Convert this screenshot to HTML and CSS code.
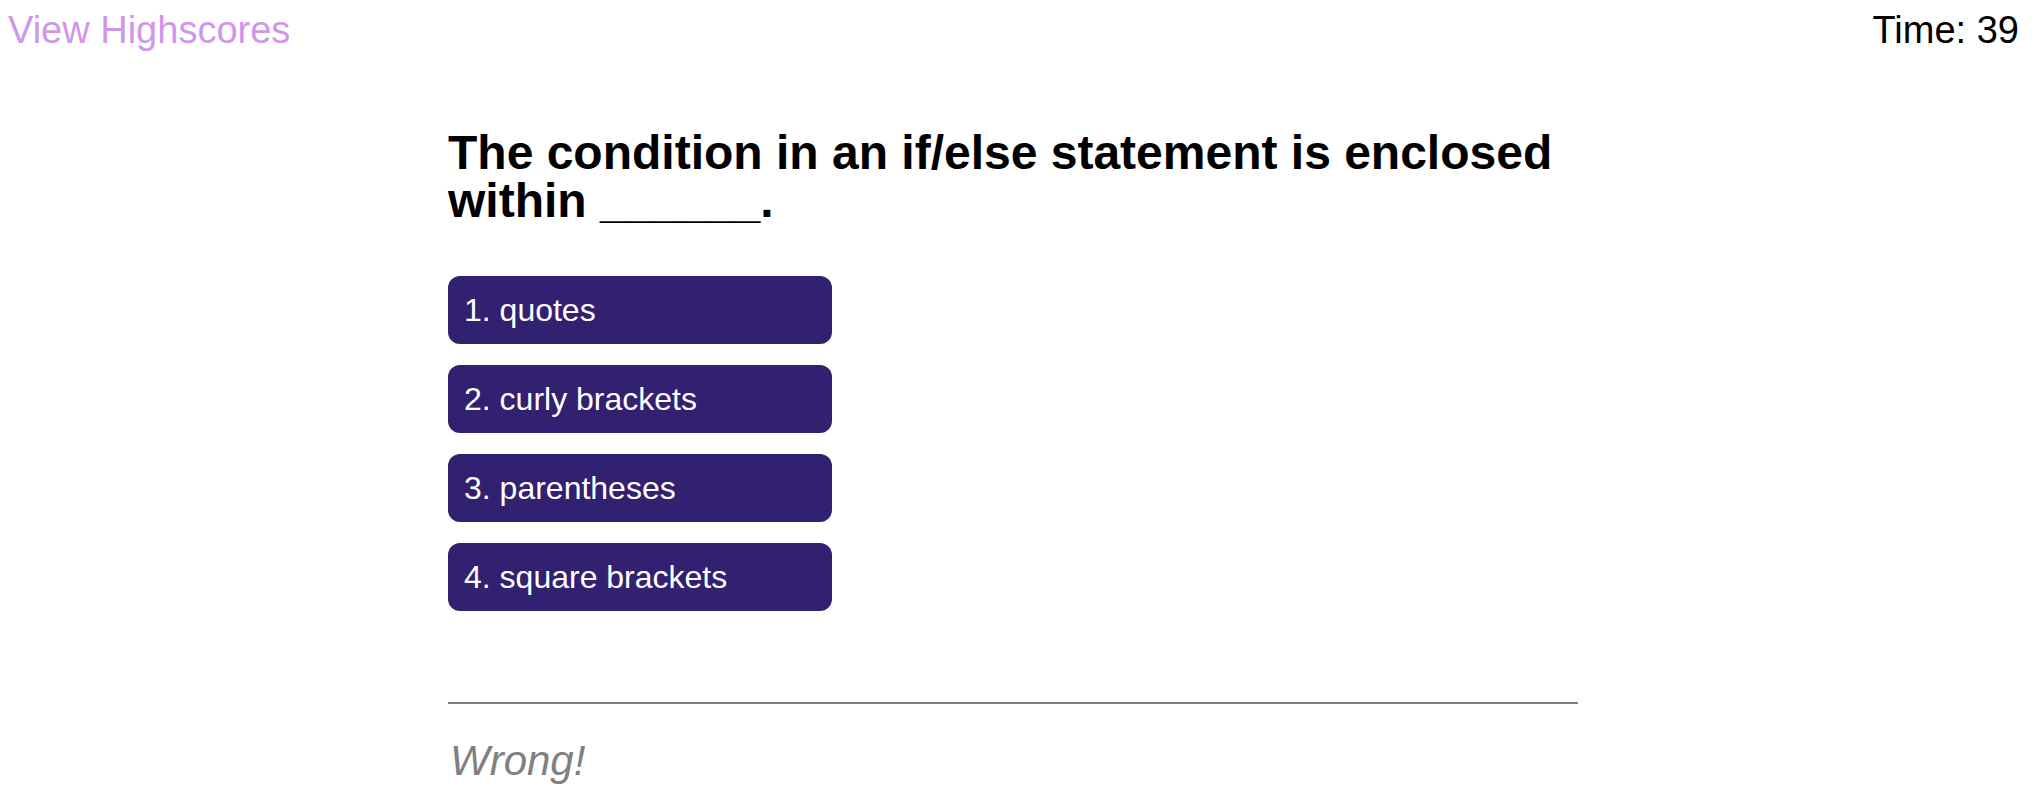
FILE: index.html
```html
<!DOCTYPE html>
<html lang="en">
<head>
<meta charset="utf-8">
<title>Code Quiz</title>
<link rel="stylesheet" href="styles.css">
</head>
<body>
<header class="topbar">
  <a class="highscores" href="#">View Highscores</a>
  <div class="timer">Time: <span>39</span></div>
</header>
<main class="quiz">
  <h2 class="question">The condition in an if/else statement is enclosed within ______.</h2>
  <div class="choices">
    <button class="choice">1. quotes</button>
    <button class="choice">2. curly brackets</button>
    <button class="choice">3. parentheses</button>
    <button class="choice">4. square brackets</button>
  </div>
  <div class="feedback">
    <p class="result">Wrong!</p>
  </div>
</main>
</body>
</html>
```
FILE: styles.css
```css
html, body {
  background: #ffffff;
}

body {
  margin: 8px;
  font-family: "Liberation Sans", Arial, Helvetica, sans-serif;
  color: #000000;
}

.topbar {
  display: flex;
  justify-content: space-between;
  align-items: flex-start;
  padding-top: 1px;
  padding-right: 9px;
  font-size: 38px;
}

.highscores {
  color: #cf97ea;
  text-decoration: none;
}

.timer {
  color: #000000;
}

.quiz {
  width: 1130px;
  margin: 77px 0 0 440px;
}

.question {
  margin: 0;
  font-size: 48px;
  font-weight: bold;
  line-height: 48px;
}

.choices {
  display: flex;
  flex-direction: column;
  align-items: flex-start;
  gap: 21px;
  margin-top: 51px;
}

.choice {
  width: 384px;
  height: 68px;
  padding: 0 16px;
  border: none;
  border-radius: 12px;
  background: #322070;
  color: #ffffff;
  font-family: "Liberation Sans", Arial, Helvetica, sans-serif;
  font-size: 32px;
  line-height: 36px;
  text-align: left;
  cursor: pointer;
}

.feedback {
  margin-top: 91px;
  border-top: 2px solid #808080;
}

.result {
  margin: 33px 0 0 2px;
  font-size: 42px;
  font-style: italic;
  color: #808080;
}
```
